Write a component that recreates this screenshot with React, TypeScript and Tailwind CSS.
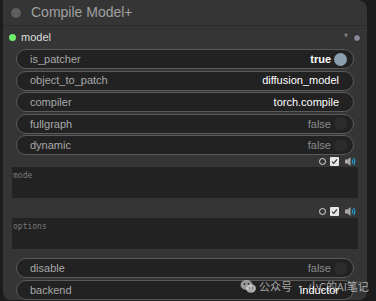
const font = { fontFamily: '"Liberation Sans", Arial, sans-serif' }

type PillProps = {
  label: string
  value: string
  toggle?: "on" | "off"
}

const Pill = ({ label, value, toggle }: PillProps) => (
  <div className="flex items-center h-[20px] mx-[13px] rounded-full bg-[#222222] border border-[#5a5a5a] pl-[13px] pr-[6px] text-[11px]">
    <span className="text-[#a8a8a8] flex-1">{label}</span>
    <span
      className={
        toggle === "off"
          ? "text-[#8a8a8a]"
          : toggle === "on"
          ? "text-white font-bold"
          : "text-white pr-[8px]"
      }
    >
      {value}
    </span>
    {toggle && (
      <span
        className={`ml-[3px] w-[13px] h-[13px] rounded-full ${
          toggle === "on" ? "bg-[#8c9fb1]" : "bg-[#2c2c2c]"
        }`}
      />
    )}
  </div>
)

const WidgetIcons = () => (
  <div className="flex items-center justify-end gap-[3px] h-[11px] pr-[11px]">
    <span className="w-[7px] h-[7px] rounded-full border border-[#dddddd]" />
    <span className="w-[9px] h-[9px] bg-[#e6e6e6] rounded-[1px] flex items-center justify-center ml-[1px]">
      <svg width="7" height="7" viewBox="0 0 8 8">
        <path d="M1.2 4.2 L3.2 6.2 L6.8 1.6" stroke="#333" strokeWidth="1.4" fill="none" />
      </svg>
    </span>
    <svg width="12" height="11" viewBox="0 0 12 11" className="ml-[2px]">
      <path d="M1 3.5 H3.5 L6.5 1 V10 L3.5 7.5 H1 Z" fill="#a9a9a9" />
      <path d="M8 3.5 Q9.4 5.5 8 7.5" stroke="#1f9fd0" strokeWidth="1.2" fill="none" />
      <path d="M9.6 2 Q12 5.5 9.6 9" stroke="#1f9fd0" strokeWidth="1.2" fill="none" />
    </svg>
  </div>
)

const TextBox = ({ placeholder }: { placeholder: string }) => (
  <div
    className="h-[31px] mx-[9px] bg-[#222222] px-[1px] pt-[5px] text-[8px] leading-none text-[#7a7a7a]"
    style={{ fontFamily: '"DejaVu Sans Mono", "Liberation Mono", monospace' }}
  >
    {placeholder}
  </div>
)

const App = () => {
  return (
    <div
      className="relative w-[376px] h-[301px] overflow-hidden bg-[#1c1c1c]"
      style={font}
    >
      <div className="ml-[3px] w-[364px] h-[300px] bg-[#353535] rounded-tr-[9px] rounded-b-[8px]">
        <div className="flex items-center h-[26px] border-b border-[#2c2c2c] pl-[8px]">
          <span className="w-[10px] h-[10px] rounded-full bg-[#5e5e5e]" />
          <span className="ml-[10px] text-[14px] text-[#a0a0a0]">Compile Model+</span>
        </div>
        <div className="flex items-center h-[23px] pl-[6px] pr-[6px] text-[11px]">
          <span className="w-[7px] h-[7px] rounded-full bg-[#6cf06c]" />
          <span className="ml-[5px] text-[#dddddd] flex-1">model</span>
          <span className="text-[#9a9a9a] text-[10px] mr-[5px]">*</span>
          <span className="w-[8px] h-[8px] rounded-full bg-[#8a8a9a] border border-[#222]" />
        </div>
        <div className="flex flex-col gap-[1.6px]">
          <Pill label="is_patcher" value="true" toggle="on" />
          <Pill label="object_to_patch" value="diffusion_model" />
          <Pill label="compiler" value="torch.compile" />
          <Pill label="fullgraph" value="false" toggle="off" />
          <Pill label="dynamic" value="false" toggle="off" />
        </div>
        <div className="pt-[1px]">
          <WidgetIcons />
        </div>
        <TextBox placeholder="mode" />
        <div className="pt-[8px] pb-[1px]">
          <WidgetIcons />
        </div>
        <TextBox placeholder="options" />
        <div className="flex flex-col gap-[2px] pt-[9px]">
          <Pill label="disable" value="false" toggle="off" />
          <Pill label="backend" value="inductor" />
        </div>
      </div>
      <div
        className="absolute left-[240px] top-[278px] flex items-center gap-[2px] text-[11px] text-white/60"
        style={{ fontFamily: '"Noto Sans CJK SC", "Noto Sans", sans-serif' }}
      >
        <svg width="17" height="15" viewBox="0 0 17 15">
          <ellipse cx="6.5" cy="6" rx="6" ry="5" fill="#bfbfbf" fillOpacity="0.75" />
          <ellipse cx="11" cy="9.5" rx="5" ry="4.2" fill="#d0d0d0" fillOpacity="0.8" />
          <circle cx="4.5" cy="5" r="0.9" fill="#333" />
          <circle cx="8.5" cy="5" r="0.9" fill="#333" />
          <circle cx="9.5" cy="9" r="0.7" fill="#555" />
          <circle cx="12.5" cy="9" r="0.7" fill="#555" />
        </svg>
        <span>公众号 · 小C的AI笔记</span>
      </div>
    </div>
  )
}

export default App
